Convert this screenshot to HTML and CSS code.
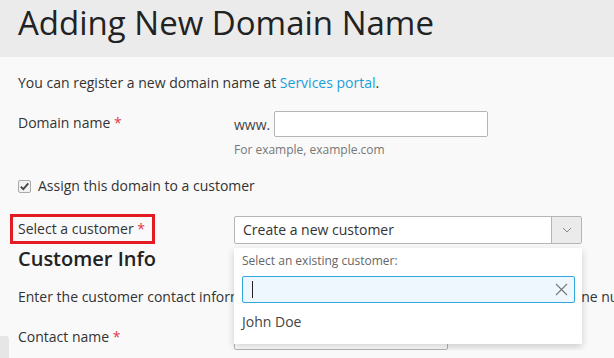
FILE: index.html
```html
<!DOCTYPE html>
<html lang="en">
<head>
  <meta charset="UTF-8">
  <title>Adding New Domain Name</title>
  <link rel="stylesheet" href="styles.css">
</head>
<body>
  <header class="page-header">
    <h1>Adding New Domain Name</h1>
  </header>

  <main class="content">
    <p class="intro">You can register a new domain name at <a href="#">Services portal</a>.</p>

    <div class="form-row domain-row">
      <label class="field-label">Domain name <span class="req">*</span></label>
      <div class="field">
        <div class="www-group">
          <span class="www">www.</span>
          <input type="text" class="text-input domain-input">
        </div>
        <div class="hint">For example, example.com</div>
      </div>
    </div>

    <label class="check-row">
      <span class="fake-check">
        <svg width="11" height="11" viewBox="0 0 11 11"><polyline points="1.8,5.6 4.3,8.2 9.3,2.3" fill="none" stroke="#444" stroke-width="1.8"/></svg>
      </span>
      Assign this domain to a customer
    </label>

    <div class="form-row select-row">
      <div class="field-label"><span class="highlight">Select a customer <span class="req">*</span></span></div>
      <div class="field">
        <div class="select">
          <span class="select-value">Create a new customer</span>
          <span class="select-arrow">
            <svg width="10" height="6" viewBox="0 0 10 6"><polyline points="1,1 5,5 9,1" fill="none" stroke="#888" stroke-width="1"/></svg>
          </span>
          <div class="dropdown">
            <div class="dropdown-caption">Select an existing customer:</div>
            <div class="search-box">
              <span class="caret"></span>
              <svg class="clear-icon" width="13" height="13" viewBox="0 0 13 13"><path d="M1 1L12 12M12 1L1 12" stroke="#777" stroke-width="1.1"/></svg>
            </div>
            <div class="option">John Doe</div>
          </div>
        </div>
      </div>
    </div>

    <h2>Customer Info</h2>
    <p class="section-text">Enter the customer contact information. The customer will be able to change their phone number and other details later.</p>

    <div class="form-row contact-row">
      <label class="field-label">Contact name <span class="req">*</span></label>
      <div class="field">
        <input type="text" class="text-input contact-input">
      </div>
    </div>
  </main>

  <div class="side-tab"></div>
</body>
</html>
```

FILE: styles.css
```css
html, body { margin: 0; padding: 0; }
body { background-color: #f9f9f9; font-family: 'Open Sans', sans-serif; font-size: 14px; color: #333; overflow: hidden; }

.page-header { background-color: #ebebeb; height: 57px; padding: 0 18px; box-sizing: border-box; }
.page-header h1 { margin: 0; font-size: 33px; font-weight: 400; line-height: 46px; color: #222; white-space: nowrap; }

.content { padding: 16px 18px 0; }
.intro { margin: 0; line-height: 20px; white-space: nowrap; }
.intro a { color: #1a9ed9; text-decoration: none; }

.form-row { display: flex; align-items: flex-start; }
.field-label { width: 216px; flex-shrink: 0; line-height: 20px; }
.req { color: #e0364f; }
.field { flex: 1; }

.domain-row { margin-top: 18px; }
.domain-row .field-label { padding-top: 2px; }
.www-group { display: flex; align-items: center; gap: 4px; }
.www { color: #444; }
.text-input { height: 26px; box-sizing: border-box; border: 1px solid #b5b5b5; border-radius: 2px; background: #fff; padding: 0 6px; font: inherit; }
.domain-input { width: 214px; }
.hint { margin-top: 5px; font-size: 12px; color: #777; line-height: 16px; }

.check-row { display: flex; align-items: center; gap: 7px; margin-top: 18px; line-height: 20px; }
.fake-check { width: 11px; height: 11px; border: 1px solid #aaa; border-radius: 2px; background: #f2f2f2; display: flex; align-items: center; justify-content: center; }
.fake-check svg { display: block; }

.select-row { margin-top: 20px; }
.select-row .field-label { margin-left: -8px; width: 224px; margin-top: -2px; }
.highlight { display: inline-block; border: 3px solid #e31b23; padding: 2px 7px 2px 5px; line-height: 20px; }

.select { position: relative; width: 348px; height: 28px; box-sizing: border-box; border: 1px solid #b5b5b5; border-radius: 2px; background: #fff; display: flex; }
.select-value { flex: 1; padding-left: 8px; line-height: 26px; font-size: 14px; color: #333; }
.select-arrow { width: 29px; background: #ebebeb; border-left: 1px solid #b5b5b5; display: flex; align-items: center; justify-content: center; }

.dropdown { position: absolute; top: 31px; left: -1px; width: 348px; background: #fff; box-shadow: 0 3px 8px rgba(0, 0, 0, 0.18); padding: 4px 8px 12px; box-sizing: border-box; z-index: 2; }
.dropdown-caption { font-size: 12px; color: #666; line-height: 17px; }
.search-box { position: relative; margin-top: 7px; margin-right: -1px; height: 27px; box-sizing: border-box; border: 1px solid #31a8dc; background: #eef7fd; border-radius: 2px; display: flex; align-items: center; }
.caret { display: block; width: 1px; height: 17px; background: #222; margin-left: 9px; }
.clear-icon { position: absolute; right: 6px; top: 6px; }
.option { padding-top: 9px; line-height: 20px; font-size: 14px; color: #444; }

h2 { margin: 1px 0 0; font-size: 20px; font-weight: 600; line-height: 28px; color: #222; }
.section-text { margin: 14px 0 0; line-height: 20px; white-space: nowrap; }

.contact-row { margin-top: 20px; }
.contact-input { width: 214px; margin-top: -13px; }

.side-tab { position: fixed; left: 0; bottom: 0; width: 9px; height: 22px; background: #e6e6e6; border-radius: 0 3px 0 0; }
```
